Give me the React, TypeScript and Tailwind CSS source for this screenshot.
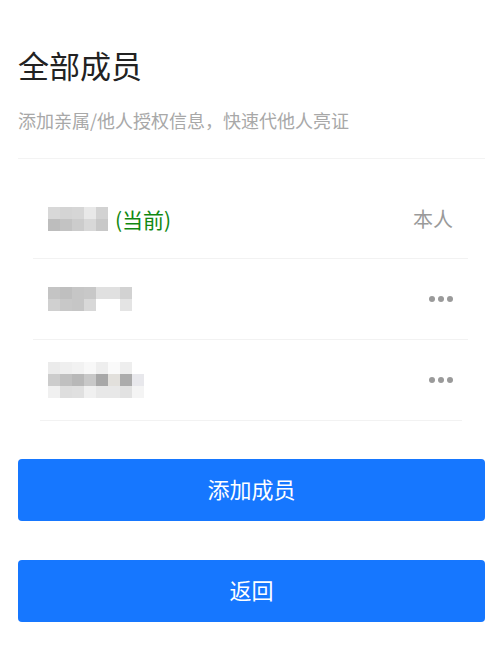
import React from "react";

const font = { fontFamily: '"Noto Sans CJK SC", "Noto Sans", sans-serif' };

function Mosaic({ rows }: { rows: string[][] }) {
  return (
    <div className="flex flex-col">
      {rows.map((r, i) => (
        <div key={i} className="flex">
          {r.map((c, j) => (
            <div key={j} className="w-[12px] h-[12px]" style={{ backgroundColor: c }} />
          ))}
        </div>
      ))}
    </div>
  );
}

function Dots() {
  return (
    <div className="flex gap-[3px] items-center">
      <span className="w-[6px] h-[6px] rounded-full bg-[#9a9a9a]" />
      <span className="w-[6px] h-[6px] rounded-full bg-[#9a9a9a]" />
      <span className="w-[6px] h-[6px] rounded-full bg-[#9a9a9a]" />
    </div>
  );
}

export default function App() {
  return (
    <div className="w-[503px] h-[654px] bg-white" style={font}>
      <div className="px-[18px] pt-[45px]">
        <h1 className="text-[31px] leading-[40px] text-[#222222] font-normal">全部成员</h1>
        <p className="mt-[23px] text-[18px] leading-[24px] text-[#a8a8a8]">
          添加亲属/他人授权信息，快速代他人亮证
        </p>
        <div className="mt-[26px] h-px bg-[#f3f3f3]" />
      </div>

      <div className="mx-[33px] mr-[35px] pt-[20px]">
        <div className="h-[80px] flex items-center justify-between px-[15px] border-b border-[#f2f2f2]">
          <div className="flex items-center">
            <Mosaic
              rows={[
                ["#d8d8d8", "#d4d4d4", "#d6d6d6", "#e8e8e8", "#d2d2d2"],
                ["#bdbdbd", "#c3c3c3", "#cccccc", "#d8d8d8", "#c8c8c8"],
              ]}
            />
            <span className="ml-[7px] text-[21px] leading-[28px] text-[#118811]">(当前)</span>
          </div>
          <span className="text-[20px] text-[#9a9a9a]">本人</span>
        </div>
        <div className="h-[81px] flex items-center justify-between px-[15px] border-b border-[#f2f2f2]">
          <div className="flex items-center">
            <Mosaic
              rows={[
                ["#c4c4c4", "#bfbfbf", "#c6c6c6", "#c8c8c8", "#e0e0e0", "#e0e0e0", "#d2d2d2"],
                ["#d0d0d0", "#c8c8c8", "#c6c6c6", "#d8d8d8", "#ffffff", "#ffffff", "#e4e4e4"],
              ]}
            />
          </div>
          <Dots />
        </div>
        <div className="h-[80px] flex items-center justify-between px-[15px]">
          <Mosaic
            rows={[
              ["#ebebeb", "#efefef", "#f2f2f2", "#f8f8f8", "#eeeeee", "#fafafa", "#eeeeee", "#ffffff"],
              ["#cccccc", "#c0c0c0", "#b8b8b8", "#c8c8c8", "#a8a8a8", "#e2e0dc", "#acacac", "#e8e8ec"],
              ["#f0f0f0", "#dedede", "#e0e0e0", "#f0f0f0", "#e8e8e8", "#e8e8e8", "#e2e2e2", "#f4f4f4"],
            ]}
          />
          <Dots />
        </div>
        <div className="mx-[7px] mr-[6px] h-px bg-[#f2f2f2]" />
      </div>

      <div className="px-[18px] pt-[38px] flex flex-col gap-[39px]">
        <button className="h-[62px] w-full rounded-[4px] bg-[#1677ff] text-white text-[22px] pb-[4px]">添加成员</button>
        <button className="h-[62px] w-full rounded-[4px] bg-[#1677ff] text-white text-[22px] pb-[4px]">返回</button>
      </div>
    </div>
  );
}
